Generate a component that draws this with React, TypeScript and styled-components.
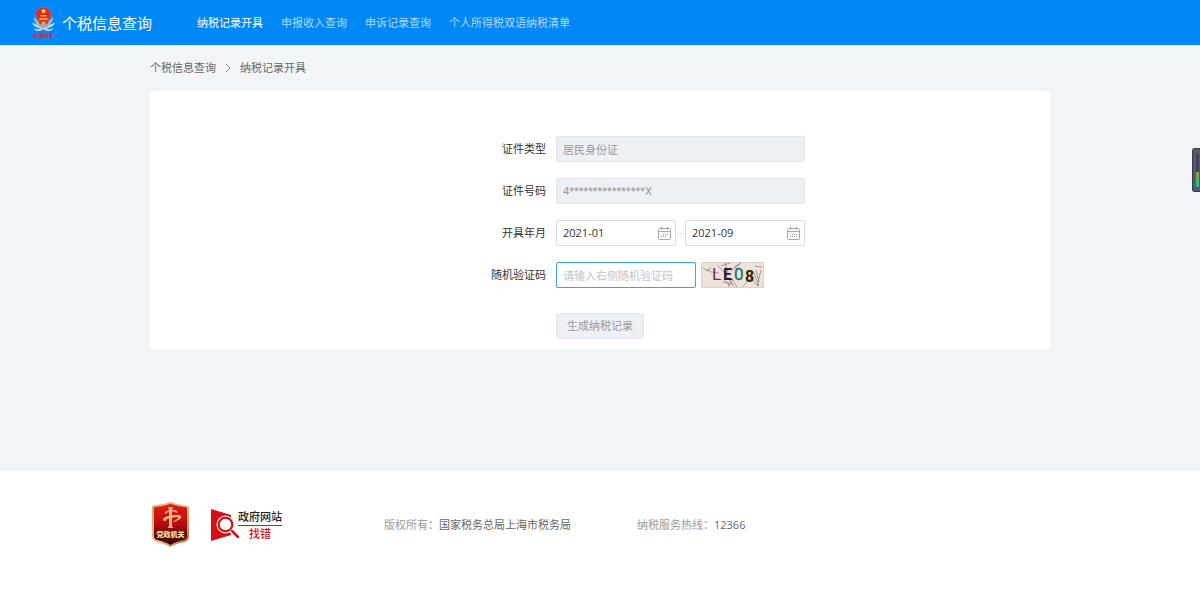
import React, { useState } from 'react';
import styled, { createGlobalStyle } from 'styled-components';

const sans = '"Open Sans", "Noto Sans CJK SC", sans-serif';

const GlobalStyle = createGlobalStyle`
  *, *::before, *::after { box-sizing: border-box; }
  html, body, #root { min-height: 100vh; }
  body {
    margin: 0;
    background: #ffffff;
    color: #333333;
    font: 11px/16px ${sans};
  }
  a { color: inherit; text-decoration: none; }
  button, input { font: inherit; }
`;

const Page = styled.div`
  display: flex;
  flex-direction: column;
  min-height: 100vh;
`;

const Header = styled.header`
  display: flex;
  align-items: center;
  height: 45px;
  padding: 0 31px;
  background: #0188f7;
  color: #ffffff;
`;

const Brand = styled.a`
  display: flex;
  align-items: center;
  gap: 6px;
  font-size: 15px;
  line-height: 24px;
  white-space: nowrap;
`;

const Nav = styled.nav`
  display: flex;
  gap: 18px;
  margin-left: 45px;
  white-space: nowrap;
`;

const NavLink = styled.a<{ $active?: boolean }>`
  color: ${p => (p.$active ? '#ffffff' : '#b3dbfd')};
`;

const Main = styled.main`
  flex: 0 0 auto;
  padding: 15px 20px 122px;
  background: #f1f5f8;
`;

const Container = styled.div`
  max-width: 900px;
  margin: 0 auto;
`;

const Crumbs = styled.nav`
  display: flex;
  align-items: center;
  gap: 8px;
  height: 16px;
  margin-bottom: 15px;
  color: #666666;
`;

const Card = styled.form`
  display: grid;
  gap: 16px;
  padding: 45px 0 10px;
  border-radius: 2px;
  background: #ffffff;
`;

const Row = styled.div<{ $spaced?: boolean }>`
  display: grid;
  grid-template-columns: 44% 249px;
  gap: 10px;
  align-items: center;
  margin-top: ${p => (p.$spaced ? '9px' : '0')};
`;

const Label = styled.label`
  text-align: right;
`;

const Field = styled.input`
  width: 100%;
  height: 26px;
  padding: 0 6px;
  border: 1px solid #d9dde3;
  border-radius: 2px;
  background: #ffffff;
  color: #333333;
  outline: none;
  &:disabled {
    border-color: #e1e5ea;
    background: #edf1f5;
    color: #999999;
  }
`;

const IdField = styled(Field)`
  font-family: Roboto, "Noto Sans CJK SC", sans-serif;
`;

const CodeField = styled(Field)`
  flex: 0 0 140px;
  width: 140px;
  border-color: #3a9ff8;
  &::placeholder { color: #c0c4cc; opacity: 1; }
`;

const Inline = styled.div<{ $gap: string }>`
  display: flex;
  align-items: center;
  gap: ${p => p.$gap};
  min-width: 0;
`;

const DateBox = styled.div`
  display: flex;
  flex: 1 1 0;
  align-items: center;
  min-width: 0;
  height: 26px;
  border: 1px solid #d9dde3;
  border-radius: 2px;
  background: #ffffff;
`;

const DateInput = styled.input`
  flex: 1 1 0;
  width: 0;
  min-width: 0;
  padding: 0 6px;
  border: 0;
  background: transparent;
  color: #333333;
  outline: none;
`;

const IconButton = styled.button`
  display: flex;
  flex: none;
  padding: 0 4px 0 0;
  border: 0;
  background: none;
  cursor: pointer;
`;

const Dash = styled.span`
  flex: none;
  width: 5px;
  height: 1px;
  background: #d9dde3;
`;

const CaptchaButton = styled.button`
  display: flex;
  flex: none;
  padding: 0;
  border: 0;
  background: none;
  cursor: pointer;
`;

const Submit = styled.button`
  grid-column: 2;
  justify-self: start;
  height: 26px;
  padding: 0 10px;
  border: 1px solid #e1e5ea;
  border-radius: 2px;
  background: #edf1f5;
  color: #999999;
`;

const Footer = styled.footer`
  flex: 1;
  padding: 30px 20px;
`;

const FooterRow = styled(Container)`
  display: flex;
  align-items: center;
  white-space: nowrap;
`;

const BadgeLink = styled.a`
  display: flex;
`;

const ReportLink = styled.a`
  display: flex;
  align-items: center;
  margin-left: 20px;
  font-weight: 500;
`;

const ReportText = styled.span`
  display: flex;
  flex-direction: column;
  align-items: center;
  margin-left: -2px;
  padding-top: 1px;
  color: #222222;
`;

const ReportAction = styled.span`
  align-self: stretch;
  border-top: 1px solid #d4161c;
  color: #d4161c;
  text-align: center;
`;

const Info = styled.p<{ $indent: string }>`
  margin: 0 0 0 ${p => p.$indent};
  color: #999999;
`;

const InfoValue = styled.span`
  color: #666666;
`;

const SideMeter = styled.div`
  position: fixed;
  top: 148px;
  right: 0;
  width: 8px;
  height: 44px;
  padding: 5px 1px 4px 3px;
  border: 1px solid #363b4b;
  border-right: 0;
  border-radius: 3px 0 0 3px;
  background: #565b6b;
`;

const MeterBar = styled.div`
  height: 100%;
  background: linear-gradient(#40465a 0 55%, #8aa556 55%, #5eab6b 78%, #32b5a0 100%);
`;

const Emblem = () => (
  <svg width="25" height="34" viewBox="0 0 25 34" aria-hidden="true">
    <path d="M1 17c2 4 6 5 9 5-3 2-6 1-8 0 2 3 6 4 9 2l1.500-1 1.500 1c3 2 7 1 9-2-2 1-5 2-8 0 3 0 7-1 9-5l-5 2-6.500 3L6 19z" fill="#d4d8dc" />
    <path d="M3 10c0 7 4 11 9.500 12C18 21 22 17 22 10l-3 4-6.500 4L6 14z" fill="#a3a8af" />
    <path d="M3 13l5 6m-6-2l8 5m12-9l-5 6m6-2l-8 5" stroke="#d5d9de" strokeWidth="0.8" />
    <circle cx="12.500" cy="8.500" r="7.300" fill="#e5261d" stroke="#e8602c" strokeWidth="0.6" />
    <path d="M12.500 2.500l.8 1.600 1.900.2-1.400 1.200.4 1.800-1.700-.9-1.700.9.4-1.800-1.400-1.200 1.900-.2z" fill="#ffe052" />
    <path d="M9 9h7l-1 1.500h-5z" fill="#ffc044" />
    <path d="M7.500 12h10l-2 2h-6z" fill="#f9a03a" />
    <path d="M7 14.500l3.500 1 2 2 2-2 3.500-1-2 4-3.500-1-3.500 1z" fill="#df3221" />
    <path d="M10 17l2.500-1.500L15 17l-2.500 1.500z" fill="#f3b052" />
    <text x="12.500" y="31" textAnchor="middle" fontFamily='"Noto Sans CJK SC", sans-serif' fontSize="5" fontWeight="700" fill="#e8182a">中国税务</text>
  </svg>
);

const Calendar = () => (
  <svg width="14" height="14" viewBox="0 0 14 14" fill="none" stroke="#a8a8a8" aria-hidden="true">
    <rect x="1.500" y="2.500" width="12" height="11" rx="1" />
    <path d="M1.500 5.500h12M4.500 1v3M10.500 1v3" />
    <path d="M6 8.500h1m1 0h1m1 0h1M4 10.500h1m1 0h1m1 0h1" stroke="#8f8f8f" />
  </svg>
);

const Captcha = () => (
  <svg width="63" height="26" viewBox="0 0 63 26" role="img" aria-label="验证码">
    <rect x=".5" y=".5" width="62" height="25" fill="#efe2d8" stroke="#d8d3d0" />
    <path
      d="M2 6l8 4 8 1M5 9l5-3M16 3l8 8 9 14M24 1l3 9-4 8 6 6M20 4l9-3M22 20l10 2M27 25l4-8 5 8M30 9l9-7M33 5l7-4M42 24l9-9M52 9l6 15M54 4l7 1M55 8l3 12M60 8l-4 16M49 15l8 9"
      stroke="#8d8784"
      strokeWidth=".8"
      fill="none"
    />
    <g fontFamily="Roboto, sans-serif" fontSize="17">
      <text x="11" y="18" fill="#77256e">L</text>
      <text x="22" y="18" fill="#351734" fontWeight="700" fontSize="16">E</text>
      <text x="33" y="18" fill="#08757b" stroke="#08757b" strokeWidth=".3">0</text>
      <text x="44" y="20" fill="#2e250b" fontWeight="700" fontSize="16">8</text>
    </g>
  </svg>
);

const Shield = () => (
  <svg width="40" height="48" viewBox="0 0 40 48" role="img" aria-label="党政机关">
    <defs>
      <linearGradient id="shieldRed" x1="0" y1="0" x2="0" y2="1">
        <stop stopColor="#e01c17" />
        <stop offset=".5" stopColor="#b80d10" />
        <stop offset=".72" stopColor="#6a090d" />
        <stop offset="1" stopColor="#300407" />
      </linearGradient>
      <linearGradient id="shieldGold" x1="0" y1="0" x2="1" y2="1">
        <stop stopColor="#dd9c62" />
        <stop offset=".5" stopColor="#f3bf83" />
        <stop offset="1" stopColor="#a66f43" />
      </linearGradient>
    </defs>
    <path d="M2 6Q2 5 4 4.500 13 4 20.500 1 28 4 37 4.500 39 5 39 6v30q0 3-4 5-10 2-14.500 5-5-3-14.500-5-4-2-4-5z" fill="url(#shieldGold)" />
    <path d="M4 6.500Q13 5.500 20.500 3 28 5.500 37 6.500V35q0 3-3 4-9 2-13.500 5Q16 41 7 39q-3-1-3-4z" fill="url(#shieldRed)" />
    <path d="M18 5.500q2.500 1.500 5 0l-1 3.500v16l1.500 2h-6l1.500-2V9z" fill="#f2b77e" />
    <path d="M15 12.500q2-2.500 5-2.500M22 9.500q4 0 5 2" fill="none" stroke="#f2b77e" strokeWidth="1.500" />
    <path d="M29 14q4 1 1 4-4 3-9 3 6-2 7-4 1-2-7 0-6 1-5 3-3 0-3-2 2-4 16-4z" fill="#f2b77e" />
    <text x="20.500" y="36" textAnchor="middle" fontFamily='"Noto Sans CJK SC", sans-serif' fontSize="7" fontWeight="900" fill="#ffe0a8">党政机关</text>
  </svg>
);

const Finder = () => (
  <svg width="30" height="34" viewBox="0 0 30 34" aria-hidden="true">
    <path d="M1 1l20 6v20L1 33z" fill="#d40f16" />
    <circle cx="15.500" cy="16.500" r="9" fill="#ffffff" />
    <circle cx="15.500" cy="16.500" r="6.800" fill="#ffffff" stroke="#d40f16" strokeWidth="2.200" />
    <path d="M21 22l7 7" stroke="#ffffff" strokeWidth="5" />
    <path d="M22 23l6 6" stroke="#d40f16" strokeWidth="2.500" strokeLinecap="round" />
  </svg>
);

const navItems = ['纳税记录开具', '申报收入查询', '申诉记录查询', '个人所得税双语纳税清单'];

interface MonthFieldProps {
  id: string;
  label: string;
  initial: string;
}

const MonthField = ({ id, label, initial }: MonthFieldProps) => {
  const [value, setValue] = useState(initial);
  return (
    <DateBox>
      <DateInput id={id} aria-label={label} value={value} onChange={e => setValue(e.target.value)} />
      <IconButton type="button" aria-label="选择年月"><Calendar /></IconButton>
    </DateBox>
  );
};

export default function App() {
  return (
    <Page>
      <GlobalStyle />
      <Header>
        <Brand href="#"><Emblem />个税信息查询</Brand>
        <Nav>
          {navItems.map((item, i) => (
            <NavLink key={item} href="#" $active={i === 0}>{item}</NavLink>
          ))}
        </Nav>
      </Header>
      <Main>
        <Container>
          <Crumbs>
            <a href="#">个税信息查询</a>
            <svg width="8" height="10" viewBox="0 0 8 10" fill="none" stroke="#888888" aria-hidden="true">
              <path d="M2 1l4 4-4 4" />
            </svg>
            <span>纳税记录开具</span>
          </Crumbs>
          <Card onSubmit={e => e.preventDefault()}>
            <Row>
              <Label htmlFor="idType">证件类型</Label>
              <Field id="idType" value="居民身份证" disabled />
            </Row>
            <Row>
              <Label htmlFor="idNumber">证件号码</Label>
              <IdField id="idNumber" value="4****************X" disabled />
            </Row>
            <Row>
              <Label htmlFor="from">开具年月</Label>
              <Inline $gap="2px">
                <MonthField id="from" label="开始年月" initial="2021-01" />
                <Dash />
                <MonthField id="to" label="结束年月" initial="2021-09" />
              </Inline>
            </Row>
            <Row>
              <Label htmlFor="code">随机验证码</Label>
              <Inline $gap="5px">
                <CodeField id="code" placeholder="请输入右侧随机验证码" />
                <CaptchaButton type="button"><Captcha /></CaptchaButton>
              </Inline>
            </Row>
            <Row $spaced>
              <Submit disabled>生成纳税记录</Submit>
            </Row>
          </Card>
        </Container>
      </Main>
      <Footer>
        <FooterRow>
          <BadgeLink href="#"><Shield /></BadgeLink>
          <ReportLink href="#">
            <Finder />
            <ReportText>
              政府网站
              <ReportAction>找错</ReportAction>
            </ReportText>
          </ReportLink>
          <Info $indent="102px">版权所有：<InfoValue>国家税务总局上海市税务局</InfoValue></Info>
          <Info $indent="66px">纳税服务热线：<InfoValue>12366</InfoValue></Info>
        </FooterRow>
      </Footer>
      <SideMeter><MeterBar /></SideMeter>
    </Page>
  );
}
